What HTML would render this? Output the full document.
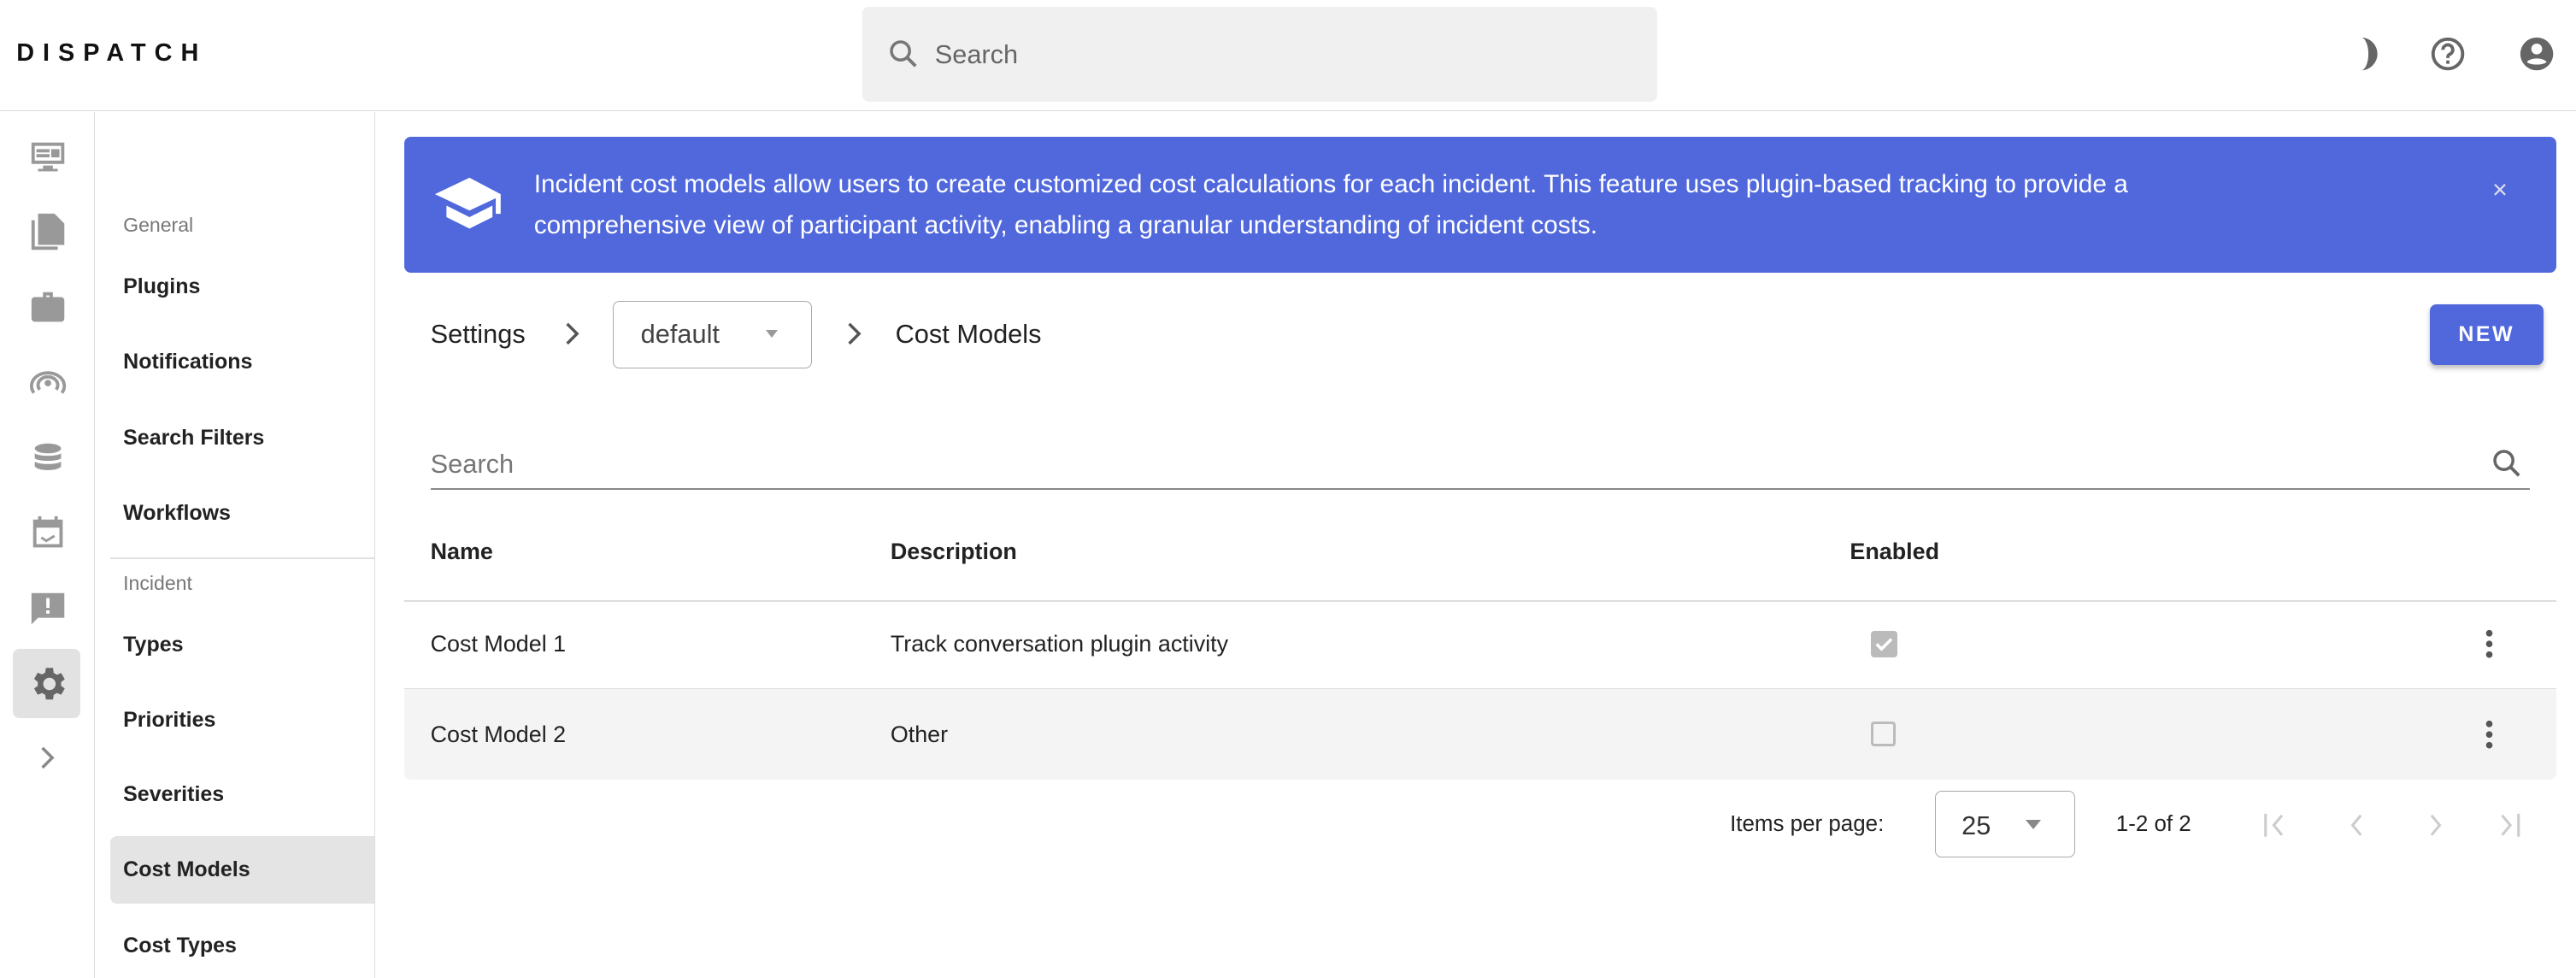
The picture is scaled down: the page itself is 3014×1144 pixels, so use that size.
<!DOCTYPE html>
<html><head><style>
html{zoom:1.92219}
body{margin:0;width:1568px;height:595px;overflow:hidden;background:#fff;font-family:"Liberation Sans",sans-serif;color:#222;position:relative}
.a{position:absolute}
.hdr{left:0;top:0;width:1568px;height:67px;border-bottom:1px solid #ddd}
.logo{left:10px;top:24px;font-weight:bold;font-size:15px;letter-spacing:5.2px;color:#111}
.sb{left:525px;top:4px;width:484px;height:58px;background:#f0f0f0;border-radius:4px}
.rail{left:0;top:68px;width:57px;height:527px;border-right:1px solid #ddd}
.nav{left:58px;top:68px;width:170px;height:527px;border-right:1px solid #ddd}
.ni{left:17px;font-size:13px;font-weight:bold;color:#222}
.sub{left:17px;font-size:12px;color:#777}
.ban{left:246px;top:83px;width:1310px;height:83px;background:#5068dc;border-radius:4px}
.txt{font-size:15.5px;color:#222}
.cell{font-size:14px;color:#222}
</style></head><body>
<div class="a hdr"></div>
<div class="a logo">DISPATCH</div>
<div class="a sb"></div>
<svg class="a" style="left:539px;top:22px" width="22" height="22" viewBox="0 0 24 24"><circle cx="10" cy="10" r="6" fill="none" stroke="#777" stroke-width="2"/><path d="M14.5 14.5L20 20" stroke="#777" stroke-width="2.2"/></svg>
<div class="a" style="left:569px;top:24px;font-size:16px;color:#666">Search</div>
<svg class="a" style="left:1430px;top:21px" width="24" height="24" viewBox="0 0 24 24"><path d="M7 2a10 10 0 0 1 0 20a4.5 10 0 0 0 0-20z" fill="#666"/></svg>
<svg class="a" style="left:1478px;top:21px" width="24" height="24" viewBox="0 0 24 24"><circle cx="12" cy="12" r="9" fill="none" stroke="#666" stroke-width="2"/><path d="M9 9.5a3 3 0 1 1 4 2.8c-1 .5-1 1.2-1 2.2" fill="none" stroke="#666" stroke-width="2"/><rect x="11" y="16" width="2" height="2" fill="#666"/></svg>
<svg class="a" style="left:1532px;top:21px" width="24" height="24" viewBox="0 0 24 24"><circle cx="12" cy="12" r="10" fill="#666"/><circle cx="12" cy="9" r="3.3" fill="#fff"/><path d="M6 17c2-3 10-3 12 0c-2 2-10 2-12 0z" fill="#fff"/></svg>

<div class="a rail"></div>
<svg class="a" style="left:17px;top:84px" width="24" height="24" viewBox="0 0 24 24" fill="#999"><path d="M2 3h20v13H2zM4 5v9h16V5z"/><rect x="5" y="7" width="8" height="2"/><rect x="14" y="7" width="5" height="5"/><rect x="5" y="10" width="8" height="2"/><rect x="9" y="17" width="6" height="2"/><rect x="6" y="19" width="12" height="1.5"/></svg>
<svg class="a" style="left:17px;top:129px" width="24" height="24" viewBox="0 0 24 24" fill="#999"><path d="M6 1h10l6 6v13H6z"/><path d="M2 5h2v16h14v2H2z"/></svg>
<svg class="a" style="left:17px;top:175px" width="24" height="24" viewBox="0 0 24 24" fill="#999"><path d="M9 3h6v3h5a2 2 0 0 1 2 2v11a2 2 0 0 1-2 2H4a2 2 0 0 1-2-2V8a2 2 0 0 1 2-2h5zM11 5v1h2V5z"/></svg>
<svg class="a" style="left:17px;top:221px" width="24" height="24" viewBox="0 0 24 24"><circle cx="12" cy="12" r="2" fill="#999"/><path d="M7 16a6 5 0 1 1 10 0M3.5 18a10 8 0 1 1 17 0" fill="none" stroke="#999" stroke-width="2"/></svg>
<svg class="a" style="left:17px;top:267px" width="24" height="24" viewBox="0 0 24 24" fill="#999"><ellipse cx="12" cy="6" rx="8" ry="3"/><path d="M4 9c2 2 14 2 16 0v3c-2 2-14 2-16 0zM4 14c2 2 14 2 16 0v3c-2 3-14 3-16 0z"/></svg>
<svg class="a" style="left:17px;top:312px" width="24" height="24" viewBox="0 0 24 24"><path d="M4 5h16v15H4z" fill="none" stroke="#999" stroke-width="2"/><path d="M4 5h16v4H4z" fill="#999"/><path d="M7 2v4M17 2v4" stroke="#999" stroke-width="2"/><path d="M8 15l3 2 5-3" fill="none" stroke="#999" stroke-width="1.5"/></svg>
<svg class="a" style="left:17px;top:358px" width="24" height="24" viewBox="0 0 24 24" fill="#999"><path d="M2 3h20v15H6l-4 4z"/><rect x="11" y="6" width="2" height="6" fill="#fff"/><rect x="11" y="13.5" width="2" height="2" fill="#fff"/></svg>
<div class="a" style="left:8px;top:395px;width:41px;height:42px;background:#e2e2e2;border-radius:4px"></div>
<svg class="a" style="left:16px;top:403px" width="26" height="26" viewBox="0 0 24 24"><path fill="#666" d="M19.4 13a7.5 7.5 0 0 0 0-2l2.1-1.6-2-3.5-2.5 1a7 7 0 0 0-1.7-1L14.9 3h-4l-.4 2.7a7 7 0 0 0-1.7 1l-2.5-1-2 3.5L6.4 11a7.5 7.5 0 0 0 0 2l-2.1 1.6 2 3.5 2.5-1a7 7 0 0 0 1.7 1l.4 2.7h4l.4-2.7a7 7 0 0 0 1.7-1l2.5 1 2-3.5zM12.9 15.5a3.5 3.5 0 1 1 0-7a3.5 3.5 0 0 1 0 7z"/></svg>
<svg class="a" style="left:21px;top:453px" width="16" height="16" viewBox="0 0 16 16"><path d="M5 2l6 6-6 6" fill="none" stroke="#888" stroke-width="1.8"/></svg>

<div class="a nav"></div>
<div class="a sub" style="left:75px;top:130px">General</div>
<div class="a ni" style="left:75px;top:167px">Plugins</div>
<div class="a ni" style="left:75px;top:213px">Notifications</div>
<div class="a ni" style="left:75px;top:259px">Search Filters</div>
<div class="a ni" style="left:75px;top:305px">Workflows</div>
<div class="a" style="left:67px;top:339px;width:161px;height:1px;background:#e0e0e0"></div>
<div class="a sub" style="left:75px;top:348px">Incident</div>
<div class="a ni" style="left:75px;top:385px">Types</div>
<div class="a ni" style="left:75px;top:431px">Priorities</div>
<div class="a ni" style="left:75px;top:476px">Severities</div>
<div class="a" style="left:67px;top:509px;width:161px;height:41px;background:#e4e4e4;border-radius:4px 0 0 4px"></div>
<div class="a ni" style="left:75px;top:522px">Cost Models</div>
<div class="a ni" style="left:75px;top:568px">Cost Types</div>

<div class="a ban"></div>
<svg class="a" style="left:264px;top:106px" width="44" height="38" viewBox="0 0 44 38" fill="#fff"><path d="M22 2L1 12l21 10 16-7.5V24h3V12z"/><path d="M8 19v7l14 7 14-7v-7l-14 7z"/></svg>
<div class="a" style="left:325px;top:100px;color:#fff;font-size:15.5px;line-height:25px;width:1070px">Incident cost models allow users to create customized cost calculations for each incident. This feature uses plugin-based tracking to provide a comprehensive view of participant activity, enabling a granular understanding of incident costs.</div>
<div class="a" style="left:1517px;top:106px;color:#dde;font-size:16px">×</div>

<div class="a txt" style="left:262px;top:194px;font-size:16px">Settings</div>
<svg class="a" style="left:340px;top:195px" width="16" height="16" viewBox="0 0 16 16"><path d="M5 2l6 6-6 6" fill="none" stroke="#555" stroke-width="1.8"/></svg>
<div class="a" style="left:373px;top:183px;width:120px;height:40px;border:1px solid #aaa;border-radius:4px"></div>
<div class="a txt" style="left:390px;top:194px;font-size:16px;color:#444">default</div>
<div class="a" style="left:466px;top:201px;border:4px solid transparent;border-top:5px solid #999"></div>
<svg class="a" style="left:512px;top:195px" width="16" height="16" viewBox="0 0 16 16"><path d="M5 2l6 6-6 6" fill="none" stroke="#555" stroke-width="1.8"/></svg>
<div class="a txt" style="left:545px;top:194px;font-size:16px">Cost Models</div>
<div class="a" style="left:1479px;top:185px;width:69px;height:37px;background:#5068dc;border-radius:4px;color:#fff;font-size:13px;font-weight:bold;letter-spacing:1.3px;text-align:center;line-height:37px;box-shadow:0 2px 3px rgba(0,0,0,.25)">NEW</div>

<div class="a" style="left:262px;top:273px;font-size:16px;color:#777">Search</div>
<div class="a" style="left:262px;top:297px;width:1278px;height:1px;background:#888"></div>
<svg class="a" style="left:1515px;top:271px" width="22" height="22" viewBox="0 0 24 24"><circle cx="10" cy="10" r="6" fill="none" stroke="#666" stroke-width="2"/><path d="M14.5 14.5L20 20" stroke="#666" stroke-width="2.2"/></svg>

<div class="a cell" style="left:262px;top:328px;font-weight:bold">Name</div>
<div class="a cell" style="left:542px;top:328px;font-weight:bold">Description</div>
<div class="a cell" style="left:1126px;top:328px;font-weight:bold">Enabled</div>
<div class="a" style="left:246px;top:365px;width:1310px;height:1px;background:#ddd"></div>
<div class="a cell" style="left:262px;top:384px">Cost Model 1</div>
<div class="a cell" style="left:542px;top:384px">Track conversation plugin activity</div>
<div class="a" style="left:1139px;top:384px;width:16px;height:16px;background:#bbb;border-radius:2px"></div>
<svg class="a" style="left:1139px;top:384px" width="16" height="16" viewBox="0 0 16 16"><path d="M3.5 8l3 3 6-6" fill="none" stroke="#fff" stroke-width="1.8"/></svg>
<svg class="a" style="left:1509px;top:382px" width="12" height="20" viewBox="0 0 12 20" fill="#555"><circle cx="6" cy="3.5" r="2"/><circle cx="6" cy="10" r="2"/><circle cx="6" cy="16.5" r="2"/></svg>
<div class="a" style="left:246px;top:419px;width:1310px;height:55px;background:#f4f4f4;border-top:1px solid #ddd;border-radius:0 0 4px 4px"></div>
<div class="a cell" style="left:262px;top:439px">Cost Model 2</div>
<div class="a cell" style="left:542px;top:439px">Other</div>
<div class="a" style="left:1139px;top:439px;width:12px;height:12px;border:2px solid #bbb;border-radius:2px"></div>
<svg class="a" style="left:1509px;top:437px" width="12" height="20" viewBox="0 0 12 20" fill="#555"><circle cx="6" cy="3.5" r="2"/><circle cx="6" cy="10" r="2"/><circle cx="6" cy="16.5" r="2"/></svg>

<div class="a cell" style="left:1053px;top:494px;font-size:13.5px">Items per page:</div>
<div class="a" style="left:1178px;top:481px;width:84px;height:40px;border:1px solid #aaa;border-radius:4px"></div>
<div class="a" style="left:1194px;top:493px;font-size:16px;color:#333">25</div>
<div class="a" style="left:1233px;top:499px;border:5px solid transparent;border-top:6px solid #888"></div>
<div class="a cell" style="left:1288px;top:494px;font-size:13.5px">1-2 of 2</div>
<svg class="a" style="left:1376px;top:493px" width="170" height="18" viewBox="0 0 170 18" fill="none" stroke="#ccc" stroke-width="1.6"><path d="M3 2v14M13 3l-5 6 5 6M61 3l-5 6 5 6M104 3l5 6-5 6M147 3l5 6-5 6M157 2v14"/></svg>
</body></html>
